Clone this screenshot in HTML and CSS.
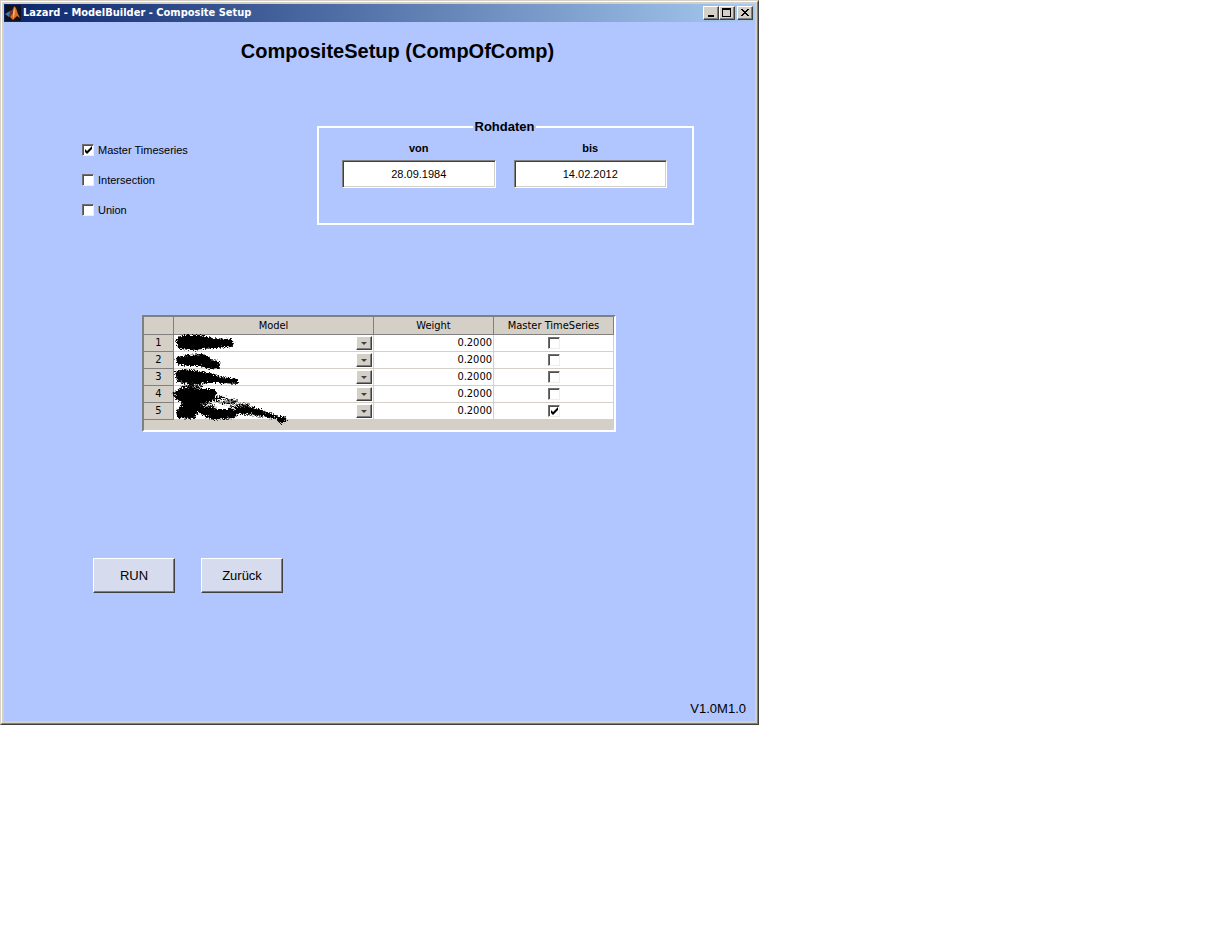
FILE: index.html
```html
<!DOCTYPE html>
<html lang="de">
<head>
<meta charset="utf-8">
<title>Lazard - ModelBuilder - Composite Setup</title>
<link rel="stylesheet" href="styles.css">
</head>
<body>
<div class="window">
  <div class="window-inner">
    <header class="titlebar">
      <svg class="app-icon" viewBox="0 0 16 16" width="16" height="16" aria-hidden="true">
        <rect width="16" height="16" fill="#10131f"/>
        <path d="M0 9 5 6 7 8 4 12Z" fill="#3f7fa8"/>
        <path d="M5 6 7 5 9 2 8 8 5 12 4 11Z" fill="#7a3430"/>
        <path d="M9 1 11 3 13 9 15 13 12 11 8 15 5 12 8 8Z" fill="#dd6b28"/>
        <path d="M9 2 10 6 9 12 8 13 8 8Z" fill="#f6b56b"/>
      </svg>
      <span class="window-title">Lazard - ModelBuilder - Composite Setup</span>
      <div class="window-controls">
        <button class="caption-button" type="button" aria-label="Minimieren"><svg viewBox="0 0 12 10" width="12" height="10"><path d="M3 7h6v2H3z"/></svg></button>
        <button class="caption-button" type="button" aria-label="Maximieren"><svg viewBox="0 0 12 10" width="12" height="10"><path fill-rule="evenodd" d="M1 0h9v9H1zM2 2v6h7V2z"/></svg></button>
        <button class="caption-button caption-close" type="button" aria-label="Schließen"><svg viewBox="0 0 12 10" width="12" height="10"><path d="M2 1h2v1h1v1h2V2h1V1h2v1H9v1H8v1H7v1h1v1h1v1h1v1H8V7H7V6H5v1H4v1H2V7h1V6h1V5h1V4H4V3H3V2H2z"/></svg></button>
      </div>
    </header>
    <main class="content">
      <h1 class="heading">CompositeSetup (CompOfComp)</h1>
      <form class="setup">
        <div class="settings">
          <div class="options">
            <label class="option"><input class="check" type="checkbox" checked>Master Timeseries</label>
            <label class="option"><input class="check" type="checkbox">Intersection</label>
            <label class="option"><input class="check" type="checkbox">Union</label>
          </div>
          <fieldset class="range">
            <legend class="range-title">Rohdaten</legend>
            <div class="dates">
              <div class="date"><label class="date-label" for="from">von</label><input class="date-input" id="from" type="text" value="28.09.1984"></div>
              <div class="date"><label class="date-label" for="to">bis</label><input class="date-input" id="to" type="text" value="14.02.2012"></div>
            </div>
          </fieldset>
        </div>
        <div class="grid">
          <table class="models">
            <colgroup><col class="col-number"><col class="col-model"><col class="col-weight"><col class="col-master"></colgroup>
            <thead><tr><th></th><th scope="col">Model</th><th scope="col">Weight</th><th scope="col">Master TimeSeries</th></tr></thead>
            <tbody>
              <tr><th scope="row">1</th><td><button class="picker" type="button" aria-label="Model 1"></button></td><td class="weight">0.2000</td><td class="master"><input class="check" type="checkbox" aria-label="Master 1"></td></tr>
              <tr><th scope="row">2</th><td><button class="picker" type="button" aria-label="Model 2"></button></td><td class="weight">0.2000</td><td class="master"><input class="check" type="checkbox" aria-label="Master 2"></td></tr>
              <tr><th scope="row">3</th><td><button class="picker" type="button" aria-label="Model 3"></button></td><td class="weight">0.2000</td><td class="master"><input class="check" type="checkbox" aria-label="Master 3"></td></tr>
              <tr><th scope="row">4</th><td><button class="picker" type="button" aria-label="Model 4"></button></td><td class="weight">0.2000</td><td class="master"><input class="check" type="checkbox" aria-label="Master 4"></td></tr>
              <tr><th scope="row">5</th><td><button class="picker" type="button" aria-label="Model 5"></button></td><td class="weight">0.2000</td><td class="master"><input class="check" type="checkbox" aria-label="Master 5" checked></td></tr>
            </tbody>
          </table>
          <svg class="redaction" viewBox="0 0 120 96" width="120" height="96" aria-hidden="true">
            <filter id="rough" x="-5%" y="-5%" width="110%" height="110%">
              <feTurbulence type="fractalNoise" baseFrequency="0.7" numOctaves="2" seed="4"/>
              <feDisplacementMap in="SourceGraphic" scale="6" xChannelSelector="R" yChannelSelector="G"/>
            </filter>
            <g filter="url(#rough)">
            <g class="ink">
              <path d="M8 7 14 5 30 5 42 8 60 9 63 12 61 15 45 16 22 18 10 17 7 13Z"/>
              <path d="M7 27 18 25 32 24 39 27 41 30 48 31 49 36 40 37 30 34 16 34 8 32Z"/>
              <path d="M6 41 14 39 28 41 44 44 53 48 50 51 38 51 22 53 8 50Z"/>
              <path d="M50 47 60 48 66 49 67 52 52 51Z"/>
              <path d="M8 60 20 57 30 59 43 59 46 63 40 70 29 72 31 76 27 79 24 87 8 86 7 80 13 75 12 70 6 67Z"/>
              <path d="M26 78 40 76 45 79 62 79 66 82 64 86 44 88 34 84Z"/>
              <path d="M66 77 78 76 92 80 96 84 86 83 74 81 66 81Z"/>
              <path d="M96 82 106 85 107 87 98 86Z"/>
              <path d="M106 86 114 86 116 89 111 91Z"/>
            </g>
            <g class="speckle">
              <path d="M10 57 20 55 32 56"/><path d="M3 63 8 61"/>
              <path d="M40 66 48 66 58 69 68 70"/><path d="M43 69 54 72 66 71"/>
              <path d="M32 75 39 73 46 77"/><path d="M60 77 70 74 80 74"/>
              <path d="M64 83 78 82 94 85"/><path d="M65 80 72 78 82 80"/>
            </g>
            </g>
          </svg>
        </div>
        <div class="actions">
          <button class="action" type="submit">RUN</button>
          <button class="action" type="button">Zurück</button>
        </div>
      </form>
      <footer class="version">V1.0M1.0</footer>
    </main>
  </div>
</div>
</body>
</html>
```
FILE: styles.css
```css
* { box-sizing: border-box; }

body {
  margin: 0;
  background: #fff;
  color: #000;
  font: 11px/16px "Liberation Sans", Arial, sans-serif;
}

button, input { font: inherit; color: inherit; border-radius: 0; }

.window {
  max-width: 759px;
  border: 1px solid;
  border-color: #d4d0c8 #404040 #404040 #d4d0c8;
}

.window-inner {
  padding: 2px;
  border: 1px solid;
  border-color: #fff #808080 #808080 #fff;
  background: #d4d0c8;
}

.titlebar {
  display: flex;
  align-items: center;
  gap: 2px;
  height: 18px;
  padding: 0 2px 0 1px;
  background: linear-gradient(to right, #0a246a, #a6caf0);
}

.app-icon { flex: none; }

.window-title {
  flex: 1;
  color: #fff;
  font: bold 11px/16px "DejaVu Sans Condensed", "Noto Sans", sans-serif;
  white-space: nowrap;
}

.window-controls { display: flex; }

.caption-button {
  display: flex;
  align-items: center;
  justify-content: center;
  width: 16px;
  height: 14px;
  padding: 0;
  border: 1px solid;
  border-color: #fff #404040 #404040 #fff;
  background: #d4d0c8;
  box-shadow: inset -1px -1px #808080;
}

.caption-button svg { width: 12px; height: 10px; }
.caption-close { margin-left: 2px; }

.content {
  padding: 17px 9px 4px;
  background: #b1c5ff;
}

.heading {
  margin: 0;
  padding-left: 36px;
  font-size: 20px;
  line-height: 24px;
  text-align: center;
}

.settings {
  display: flex;
  justify-content: space-between;
  padding: 56px 52px 0 69px;
}

.options {
  display: flex;
  flex-direction: column;
  gap: 14px;
  padding-top: 23px;
}

.option { display: flex; align-items: center; gap: 4px; }

.check {
  appearance: none;
  flex: none;
  width: 12px;
  height: 12px;
  margin: 0;
  border: 1px solid;
  border-color: #707070 #f0eee8 #f0eee8 #707070;
  background: #fff;
  box-shadow: inset 1px 1px #505050;
}

.check:checked {
  background: #fff url("data:image/svg+xml,%3Csvg xmlns='http://www.w3.org/2000/svg' viewBox='0 0 10 10'%3E%3Cpath d='M2 4v3l2 2 5-5V1L4 6z'/%3E%3C/svg%3E") center / 10px 10px no-repeat;
}

.range {
  width: 377px;
  min-width: 0;
  margin: 0;
  padding: 5px 25px 35px 23px;
  border: 2px solid #fff;
}

.range-title {
  margin: 0 auto;
  padding: 0 2px;
  font-size: 13px;
  font-weight: bold;
}

.dates { display: flex; gap: 18px; }
.date { flex: 1; display: flex; flex-direction: column; gap: 4px; }
.date-label { font-weight: bold; text-align: center; }

.date-input {
  width: 100%;
  height: 28px;
  padding: 0;
  border: 1px solid;
  border-color: #808080 #fff #fff #808080;
  background: #fff;
  box-shadow: inset 1px 1px #404040, inset -1px -1px #d4d0c8;
  text-align: center;
}

.grid {
  position: relative;
  width: fit-content;
  margin: 90px 0 0 129px;
  padding: 0 0 10px;
  border: 2px solid;
  border-color: #808080 #fff #fff #808080;
  background: #d4d0c8;
}

.models {
  table-layout: fixed;
  width: 470px;
  border-collapse: separate;
  border-spacing: 0;
  font: 11px/16px "DejaVu Sans Condensed", "Noto Sans", sans-serif;
}

.col-number { width: 30px; }
.col-model { width: 200px; }
.col-weight, .col-master { width: 120px; }

.models th, .models td {
  height: 17px;
  padding: 0;
  border: solid #d4d0c8;
  border-width: 0 1px 1px 0;
  background: #fff;
  font-weight: normal;
}

.models th { border-color: #808080; background: #d4d0c8; }
.models thead th { height: 18px; padding-top: 1px; }
.models .weight { padding-right: 1px; text-align: right; }
.models .check { display: block; margin: 0 auto; }

.picker {
  display: block;
  width: 16px;
  height: 14px;
  margin: 0 1px 0 auto;
  padding: 0;
  border: 1px solid;
  border-color: #fff #404040 #404040 #fff;
  background: #d4d0c8;
  box-shadow: inset -1px -1px #808080;
}

.picker::before {
  content: "";
  display: block;
  width: 0;
  margin: 0 auto;
  border: solid transparent;
  border-width: 3px 3px 0;
  border-top-color: #404040;
}

/* Scrawl that hides the model names */
.redaction {
  position: absolute;
  top: 14px;
  left: 26px;
  pointer-events: none;
}

.ink { stroke: #000; stroke-width: 2; }
.speckle { fill: none; stroke: #000; stroke-width: 3; stroke-dasharray: 2 1; }

.actions {
  display: flex;
  gap: 26px;
  margin: 126px 0 0 80px;
}

.action {
  width: 82px;
  height: 35px;
  padding: 0;
  border: 1px solid;
  border-color: #fff #404040 #404040 #fff;
  background: #d6dced;
  box-shadow: inset -1px -1px #808080;
  font-size: 13px;
}

.version {
  margin-top: 108px;
  font-size: 13px;
  line-height: 16px;
  text-align: right;
}
```
